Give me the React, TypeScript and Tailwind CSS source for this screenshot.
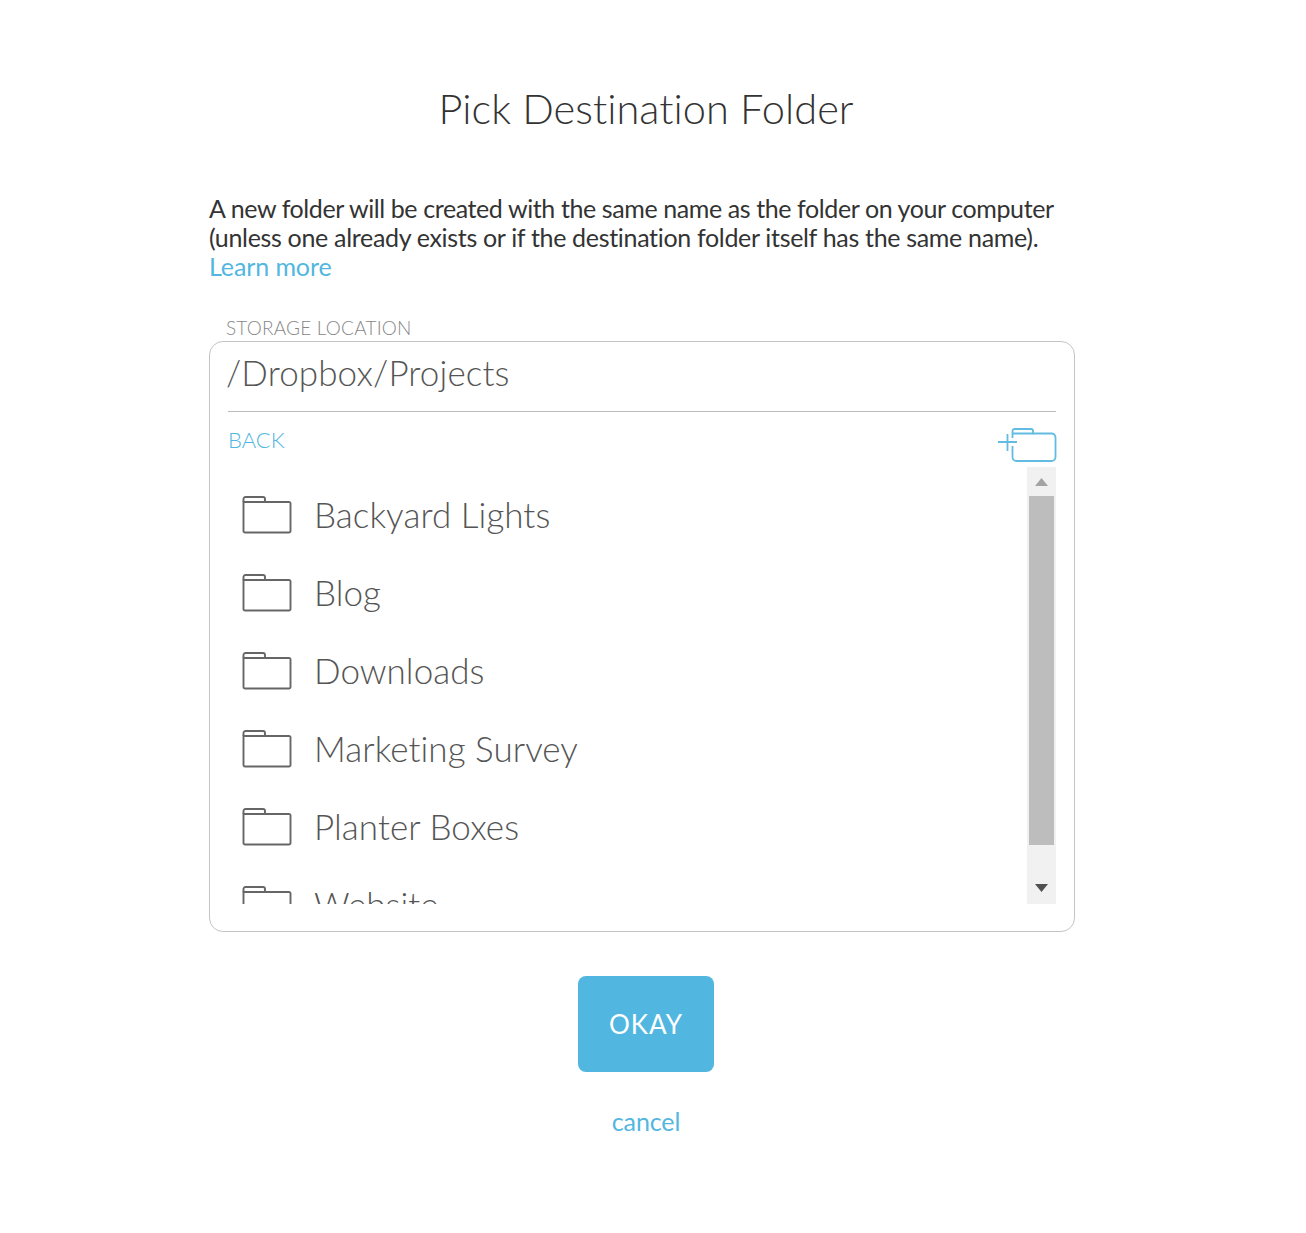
const folders = ["Backyard Lights", "Blog", "Downloads", "Marketing Survey", "Planter Boxes", "Website"];

function FolderIcon() {
  return (
    <svg width="50" height="40" viewBox="0 0 50 40" fill="none" stroke="#666" strokeWidth="1.9" className="shrink-0">
      <path d="M1.5 8V5a2 2 0 0 1 2-2H21a2 2 0 0 1 2 2v3" />
      <path d="M1.5 8H47a1.5 1.5 0 0 1 1.5 1.5V37a1.5 1.5 0 0 1-1.5 1.5H3A1.5 1.5 0 0 1 1.5 37Z" />
    </svg>
  );
}

export default function App() {
  return (
    <div className="min-h-[1233px] bg-white font-['Lato',sans-serif] [font-variant-ligatures:none] flex flex-col items-center">
      <div className="w-[866px] ml-[-22px] flex flex-col">
        <h1 className="mt-[83px] text-center text-[41.6px] leading-[50px] font-light text-[#333] ml-[8px]">Pick Destination Folder</h1>
        <p className="mt-[61px] text-[25px] leading-[29px] text-[#333] tracking-[-0.4px]">
          A new folder will be created with the same name as the folder on your computer{" "}
          <span className="tracking-[-0.32px]">(unless one already exists or if the destination folder itself has the same name).</span>
          <br />
          <span className="tracking-[-0.1px] text-[#52b7e0]">Learn more</span>
        </p>
        <div className="mt-[36px] h-[24px] pl-[17px] text-[19px] leading-[22px] tracking-[0.2px] font-light text-[#888]">STORAGE LOCATION</div>
        <div className="h-[591px] border border-[#c4c4c4] rounded-[14px] px-[18px] flex flex-col">
          <div className="h-[70px] shrink-0 border-b border-[#bbb] text-[35px] leading-[60px] tracking-[0.12px] font-light text-[#555]">
            <span className="ml-[-2px]">/Dropbox/Projects</span>
          </div>
          <div className="h-[55px] shrink-0 flex justify-between items-start">
            <span className="mt-[16px] text-[22px] leading-[24px] font-light text-[#52b7e0]">BACK</span>
            <svg width="60" height="36" viewBox="0 0 60 36" fill="none" stroke="#62bbe0" strokeWidth="1.8" className="mt-[15px] mr-[-1px]">
              <path d="M1 15H20M10.5 7V24" />
              <path d="M15.5 11V6.5M15.5 4a2 2 0 0 1 2-2H34a2 2 0 0 1 2 2v2.5H15.5V4" />
              <path d="M36 6.5H54.5a4 4 0 0 1 4 4V30a4 4 0 0 1-4 4H19.5a4 4 0 0 1-4-4V19" />
            </svg>
          </div>
          <div className="h-[437px] flex overflow-hidden">
            <ul className="flex-1 pl-[14px] pt-[8px]">
              {folders.map((f) => (
                <li key={f} className="h-[78px] flex items-center gap-[22px]">
                  <FolderIcon />
                  <span className="text-[35px] tracking-[0.05px] font-light text-[#555]">{f}</span>
                </li>
              ))}
            </ul>
            <div className="w-[29px] bg-[#f1f1f1] flex flex-col items-center">
              <svg width="13" height="8" viewBox="0 0 13 8" className="mt-[11px] fill-[#a3a3a3]"><path d="M6.5 0L13 8H0Z" /></svg>
              <div className="mt-[10px] w-[25px] h-[349px] bg-[#bdbdbd]" />
              <svg width="13" height="8" viewBox="0 0 13 8" className="mt-[39px] fill-[#505050]"><path d="M0 0H13L6.5 8Z" /></svg>
            </div>
          </div>
        </div>
        <button className="mt-[44px] self-center ml-[8px] w-[136px] h-[96px] rounded-[8px] bg-[#52b7e0] text-white text-[26px] font-normal tracking-[1px]">OKAY</button>
        <div className="mt-[32px] ml-[8px] text-center text-[25px] leading-[34px] tracking-[-0.1px] text-[#52b7e0]">cancel</div>
      </div>
    </div>
  );
}
